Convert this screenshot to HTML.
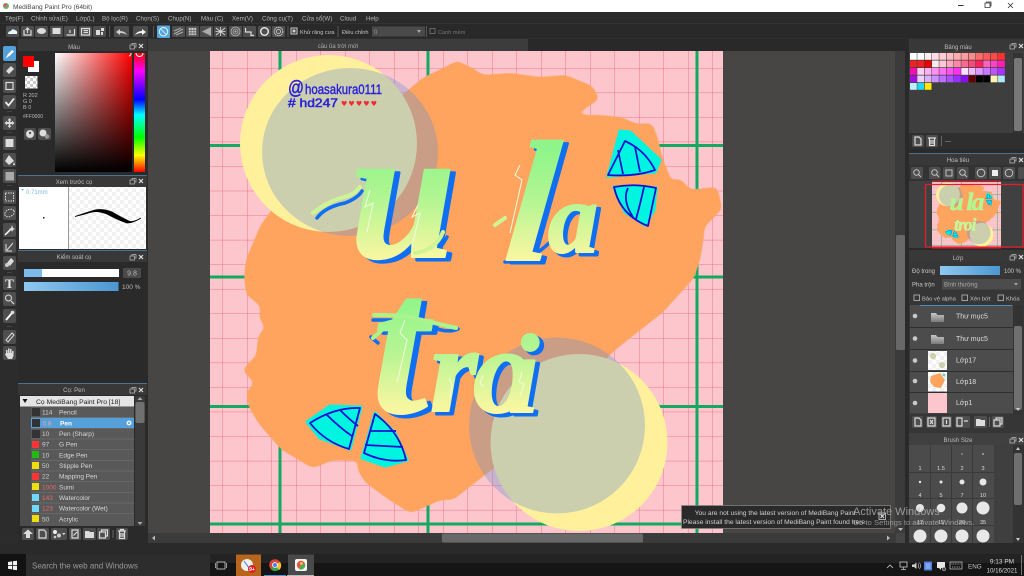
<!DOCTYPE html>
<html><head><meta charset="utf-8"><title>MediBang Paint Pro</title>
<style>
html,body{margin:0;padding:0;background:#2a2a2a;width:1024px;height:576px;overflow:hidden}
svg{display:block}
body>svg{filter:blur(.3px)}
text{font-family:"Liberation Sans","Noto Sans CJK SC",sans-serif}
.m{font-size:6.2px;fill:#b4b4b4}
.h{font-size:6px;fill:#bdbdbd;text-anchor:middle}
.l{font-size:6.5px;fill:#c8c8c8}
.b{fill:#4e4e4e}
.g{fill:#dcdcdc}
.s{fill:none;stroke:#dcdcdc;stroke-width:1.2}
.art text{font-family:"Liberation Serif",serif;font-style:italic;font-weight:bold}
.lay{font-size:7px;fill:#dedede}
.nm{font-size:6.5px;fill:#d8d8d8}
.num{font-size:6.5px;fill:#cfcfcf}
.sz{font-size:5.5px;fill:#ddd;text-anchor:middle}
</style></head><body>
<svg xmlns="http://www.w3.org/2000/svg" width="1024" height="576" viewBox="0 0 1024 576">
<defs>
<filter id="soft" x="-5%" y="-5%" width="110%" height="110%" color-interpolation-filters="sRGB"><feGaussianBlur stdDeviation="3.500"/><feComponentTransfer><feFuncA type="linear" slope="7" intercept="-3"/></feComponentTransfer></filter>
<pattern id="grid" x="247" y="68" width="24.5" height="24.55" patternUnits="userSpaceOnUse"><path d="M0 0V24.55M0 0H24.5" stroke="#ef7687" stroke-width="1" fill="none"/></pattern>
<pattern id="chk" width="6" height="6" patternUnits="userSpaceOnUse"><rect width="6" height="6" fill="#fff"/><rect width="3" height="3" fill="#ccc"/><rect x="3" y="3" width="3" height="3" fill="#ccc"/></pattern>
<pattern id="chk2" width="8" height="8" patternUnits="userSpaceOnUse"><rect width="8" height="8" fill="#fff"/><rect width="4" height="4" fill="#f1f1f1"/><rect x="4" y="4" width="4" height="4" fill="#f1f1f1"/></pattern>
<linearGradient id="sat"><stop offset="0" stop-color="#fff"/><stop offset="1" stop-color="#f00"/></linearGradient>
<linearGradient id="blk" x2="0" y2="1"><stop offset="0" stop-color="#000" stop-opacity="0"/><stop offset="1" stop-color="#000"/></linearGradient>
<linearGradient id="hue" x2="0" y2="1"><stop offset="0" stop-color="#f00"/><stop offset=".15" stop-color="#f0f"/><stop offset=".39" stop-color="#00f"/><stop offset=".52" stop-color="#0ff"/><stop offset=".71" stop-color="#0f0"/><stop offset=".86" stop-color="#ff0"/><stop offset="1" stop-color="#f00"/></linearGradient>
<linearGradient id="bar"><stop offset="0" stop-color="#8ec8f0"/><stop offset="1" stop-color="#4b97d2"/></linearGradient>
<linearGradient id="g1" gradientUnits="userSpaceOnUse" x1="0" y1="150" x2="0" y2="262"><stop offset="0" stop-color="#8ff58a"/><stop offset=".45" stop-color="#b4f592"/><stop offset="1" stop-color="#fdf7a2"/></linearGradient>
<linearGradient id="g2" gradientUnits="userSpaceOnUse" x1="0" y1="297" x2="0" y2="413"><stop offset="0" stop-color="#8ff58a"/><stop offset=".45" stop-color="#b4f592"/><stop offset="1" stop-color="#fdf7a2"/></linearGradient>
<linearGradient id="fold" x2="0" y2="1"><stop offset="0" stop-color="#c8c8c8"/><stop offset="1" stop-color="#7a7a7a"/></linearGradient>
<clipPath id="cv"><rect x="210" y="51" width="513" height="482"/></clipPath>
<g id="bgart">
  <rect x="210" y="51" width="513" height="482" fill="#fcc6cc"/>
  <rect x="210" y="51" width="513" height="482" fill="url(#grid)"/>
  <path d="M280 51V533M428 51V533M697 51V533M210 145.500H723M210 277H723M210 406.500H723M210 524H723" stroke="#14a862" stroke-width="3" fill="none"/>
  <path filter="url(#soft)" d="M403 98L425 80L442 72L457 64L470 70L482 78L510 76L540 80L565 78L590 88L596 98L582 107L566 116L556 112L566 118L600 118L620 120L637 127L650 126L654 136L660 160L667 177L670 188L678 181L690 193L715 190L719 208L702 225L700 243L697 260L691 277L661 310L614 347L560 400L500 460L480 475L452 497L440 497L411 510L390 497L367 480L360 468L363 458L333 457L313 465L283 447L262 423L252 407L249 393L259 383L246 370L259 357L261 337L269 328L262 317L264 305L249 293L247 277L249 260L263 227L273 213L300 180L350 130Z" fill="#fea45f" stroke="#fea45f" stroke-width="6" stroke-linejoin="round"/>
  <circle cx="328.500" cy="143.500" r="88.500" fill="#fff09b"/>
  <circle cx="579" cy="442.500" r="88.500" fill="#fff09b"/>
  <ellipse cx="350" cy="152" rx="88" ry="84" fill="#6790d4" fill-opacity=".34"/>
  <circle cx="557" cy="425.500" r="88" fill="#6790d4" fill-opacity=".34"/>
</g>
<g id="leaves">
  <path d="M620 131L630 132L660 160L655 172L608 176Z" fill="#00f5e0" stroke="#00f5e0" stroke-width="3" stroke-linejoin="round"/>
  <path d="M614 187L656 188L654 210L645 225L625 212Z" fill="#00f5e0" stroke="#00f5e0" stroke-width="3" stroke-linejoin="round"/>
  <path d="M307 422L330 406L361 407L350 449L320 438Z" fill="#00f5e0" stroke="#00f5e0" stroke-width="3" stroke-linejoin="round"/>
  <path d="M375 413L395 433L407 460L385 466L362 458Z" fill="#00f5e0" stroke="#00f5e0" stroke-width="3" stroke-linejoin="round"/>
  <g fill="none" stroke="#1212d0" stroke-width="1.800" stroke-linejoin="round">
    <path d="M625 141L608 175Q635 177 655 170Q645 150 625 141ZM618 150L623 174M635 147L640 172"/>
    <path d="M614 187Q635 183 656 188L648 226Q620 215 614 187ZM628 188Q622 200 633 217M644 187Q640 205 636 219"/>
    <path d="M310 423Q335 407 360 408L349 449Q325 442 310 423ZM326 414Q340 428 352 436M340 410Q350 420 358 426"/>
    <path d="M375 414L364 453Q385 463 406 460Q400 432 375 414ZM370 431L396 431M365 445L403 447"/>
  </g>
</g>
</defs>

<!-- app bg -->
<rect width="1024" height="576" fill="#2a2a2a"/>
<!-- title bar -->
<rect width="1024" height="12" fill="#fff"/>
<circle cx="6" cy="6" r="3" fill="#6fae6c"/><circle cx="5" cy="5" r="1.500" fill="#d9534f"/>
<text x="13" y="8.800" style="font-size:6.600px" fill="#444">MediBang Paint Pro (64bit)</text>
<path d="M958 5.500H963.500" stroke="#333"/><path d="M985 3H990V7.500H985ZM986.500 3V2H991V6H990" fill="none" stroke="#333" stroke-width=".8"/><path d="M1008 3L1013 8M1013 3L1008 8" stroke="#333" stroke-width=".8"/>
<!-- menu -->
<rect y="12" width="1024" height="12" fill="#2b2b2b"/>
<text class="m" x="5" y="20.500">Tệp(F)</text><text class="m" x="31" y="20.500">Chỉnh sửa(E)</text><text class="m" x="76" y="20.500">Lớp(L)</text><text class="m" x="102" y="20.500">Bộ lọc(R)</text><text class="m" x="136" y="20.500">Chọn(S)</text><text class="m" x="168" y="20.500">Chụp(N)</text><text class="m" x="201" y="20.500">Màu (C)</text><text class="m" x="232" y="20.500">Xem(V)</text><text class="m" x="262" y="20.500">Công cụ(T)</text><text class="m" x="302" y="20.500">Cửa sổ(W)</text><text class="m" x="340" y="20.500">Cloud</text><text class="m" x="366" y="20.500">Help</text>
<!-- toolbar -->
<rect y="24" width="1024" height="15" fill="#292929"/><path d="M0 23.500H1024M0 39H1024" stroke="#333"/>
<g>
<rect class="b" x="6" y="26" width="13" height="11" rx="1.500"/><path d="M8 34Q8 31 11 31Q12 28 15 30Q18 31 17 34Z" fill="#e8f4ff"/>
<rect class="b" x="21" y="26" width="13" height="11" rx="1.500"/><path class="s" d="M24 30V35H31V30M27.500 33V28M25.500 30L27.500 28L29.500 30"/>
<rect class="b" x="35" y="26" width="13" height="11" rx="1.500"/><ellipse class="g" cx="41.500" cy="31" rx="4.500" ry="3"/>
<rect class="b" x="50" y="26" width="13" height="11" rx="1.500"/><rect class="g" x="52.500" y="28" width="8" height="6"/>
<rect class="b" x="64" y="26" width="13" height="11" rx="1.500"/><path class="s" d="M66.500 35H74.500V29M70 33V30"/>
<rect class="b" x="79" y="26" width="13" height="11" rx="1.500"/><path class="s" d="M81.500 28.500H89.500V35H81.500ZM83.500 30.500H88M83.500 32.500H88"/>
<rect class="b" x="93" y="26" width="13" height="11" rx="1.500"/><path class="g" d="M96 30H100V35H96ZM101 28H104V31H101ZM101 32H103V35H101Z"/>
<rect class="b" x="114" y="26" width="15" height="11" rx="1.500"/><path d="M116 32L120 29V31Q125 31 127 35Q124 33 120 33V35Z" fill="#cfcfcf"/>
<rect class="b" x="133" y="26" width="15" height="11" rx="1.500"/><path d="M146 32L142 29V31Q137 31 135 35Q138 33 142 33V35Z" fill="#f4f4f4"/>
<rect x="157" y="25.500" width="13" height="12.500" rx="1" fill="#5aa5dc"/><circle cx="163.500" cy="31.700" r="4.200" fill="none" stroke="#dff" stroke-width=".9"/><path d="M160.500 28.700L166.500 34.700" stroke="#dff" stroke-width=".7"/>
<rect class="b" x="172" y="26" width="13" height="11" rx="1"/><path d="M174 34L183 29M174 31L181 28M176 35L183 32" stroke="#aaa" stroke-width="1.200"/>
<rect class="b" x="186" y="26" width="13" height="11" rx="1"/><path d="M188.500 27.500h8v8h-8zM191 27.500v8M194 27.500v8M188.500 30.300h8M188.500 33h8" fill="#ccc" stroke="#555" stroke-width=".7"/>
<rect class="b" x="200" y="26" width="13" height="11" rx="1"/><path d="M202 31.500L211 27V36Z" fill="#aaa"/>
<rect class="b" x="214" y="26" width="13" height="11" rx="1"/><path d="M216 28L225 35M225 28L216 35M220.500 27V36M215.500 31.500H225.500" stroke="#ddd" stroke-width=".8"/>
<rect class="b" x="229" y="26" width="13" height="11" rx="1"/><circle cx="235.500" cy="31.500" r="4.500" fill="none" stroke="#bbb" stroke-width=".8"/><circle cx="235.500" cy="31.500" r="2.500" fill="none" stroke="#bbb" stroke-width=".8"/><circle cx="235.500" cy="31.500" r="1" fill="#bbb"/>
<rect class="b" x="243" y="26" width="13" height="11" rx="1"/><path class="s" d="M245.500 28V32H251V35.500H254"/>
<rect class="b" x="258" y="26" width="13" height="11" rx="1"/><circle cx="264.500" cy="31.500" r="3.800" fill="none" stroke="#eee" stroke-width="1.400"/>
<rect class="b" x="272" y="26" width="13" height="11" rx="1"/><circle cx="278.500" cy="31.500" r="4.300" fill="none" stroke="#ddd" stroke-width="1" stroke-dasharray="1.500 .7"/><circle cx="278.500" cy="31.500" r="2" fill="none" stroke="#ddd" stroke-width=".8"/>
<path d="M109.500 26V37M153.500 26V37M288 26V37M338 26V37M426.500 26V37" stroke="#555"/>
<rect x="291" y="28" width="6" height="6" fill="none" stroke="#cfcfcf"/><rect x="292.500" y="29.500" width="3" height="3" fill="#cfcfcf"/>
<text x="300" y="34" style="font-size:5.600px" fill="#c4c4c4">Khử răng cưa</text>
<text x="342" y="34" style="font-size:5.600px" fill="#c4c4c4">Điều chỉnh</text>
<rect x="372" y="26.500" width="53" height="10" fill="#4a4a4a"/><text x="374" y="34" style="font-size:6px" fill="#999">0</text><path d="M417 30H421L419 33Z" fill="#aaa"/>
<rect x="430" y="28.500" width="5" height="5" fill="none" stroke="#666"/><text x="438" y="34" style="font-size:5.600px" fill="#777">Canh mềm</text>
</g>

<!-- left tools -->
<rect x="0" y="39" width="18" height="504" fill="#2c2c2c"/>
<rect x="3" y="46" width="13" height="15" rx="2" fill="#54a0d8"/><path d="M5.500 58.500L8 54L12 50L14 51.500L10 55.500Z" fill="#fff"/>
<rect class="b" x="3" y="63" width="13" height="14" rx="2"/><path class="g" d="M6 71L11 66L14 69L9 74Z"/>
<rect class="b" x="3" y="79" width="13" height="14" rx="2"/><rect class="s" x="6" y="82.500" width="7" height="7"/>
<rect class="b" x="3" y="95" width="13" height="14" rx="2"/><path d="M5.500 102L8.500 105.500L14 98.500" fill="none" stroke="#eee" stroke-width="1.800"/>
<rect class="b" x="3" y="116" width="13" height="14" rx="2"/><path class="g" d="M9.500 118L11.500 120.500H10.300V122H12V120.800L14.500 123L12 125.200V124H10.300V125.700H11.500L9.500 128L7.500 125.700H8.700V124H7V125.200L4.500 123L7 120.800V122H8.700V120.500H7.500Z"/>
<rect class="b" x="3" y="136" width="13" height="14" rx="2"/><rect class="g" x="5.500" y="139" width="8" height="8"/>
<rect class="b" x="3" y="153" width="13" height="14" rx="2"/><path class="g" d="M9 155L14 161L9 165L5 161Z"/><path d="M14 162L15 165H13Z" fill="#eee"/>
<rect class="b" x="3" y="169" width="13" height="14" rx="2"/><rect x="5.500" y="172" width="8.500" height="8.500" fill="#aaa"/>
<rect class="b" x="3" y="190" width="13" height="14" rx="2"/><rect x="5.500" y="193" width="8" height="8" fill="none" stroke="#ddd" stroke-dasharray="1.500 1"/>
<rect class="b" x="3" y="206" width="13" height="14" rx="2"/><ellipse cx="9.500" cy="213" rx="5" ry="3.500" fill="none" stroke="#ddd" stroke-dasharray="1.500 1" transform="rotate(-25 9.500 213)"/>
<rect class="b" x="3" y="223" width="13" height="14" rx="2"/><path d="M5 235L11 229" stroke="#fff" stroke-width="1.500"/><path class="g" d="M12 225L13 228L15 229L13 230L12 232L11 230L9 229L11 228Z"/>
<rect class="b" x="3" y="239" width="13" height="14" rx="2"/><path d="M6 244V251H12M7 250L13 243" fill="none" stroke="#ddd"/>
<rect class="b" x="3" y="256" width="13" height="14" rx="2"/><path class="g" d="M7 263L11 258L14 261L10 266Z"/><circle cx="7" cy="265" r="2" fill="#ccc"/>
<rect class="b" x="3" y="276" width="13" height="14" rx="2"/><text x="9.500" y="288" style="font-size:13px;font-weight:bold;font-family:'Liberation Serif',serif" fill="#eee" text-anchor="middle">T</text>
<rect class="b" x="3" y="292" width="13" height="14" rx="2"/><circle cx="8.500" cy="298" r="3" fill="none" stroke="#ddd"/><path d="M11 301L14 304" stroke="#ddd" stroke-width="1.200"/>
<rect class="b" x="3" y="309" width="13" height="14" rx="2"/><path d="M6 320L12 313" stroke="#fff" stroke-width="1.800"/><circle cx="12.500" cy="312.500" r="1.800" fill="#ddd"/>
<rect class="b" x="3" y="330" width="13" height="14" rx="2"/><path d="M6 340L12 333L14 335L8 342Z" fill="none" stroke="#ddd"/>
<rect class="b" x="3" y="346" width="13" height="14" rx="2"/><path class="g" d="M6 353V350H7.500V353H8V348.500H9.500V353H10V349H11.500V353H12V351L13.500 351V356L12 359H8L5 354.500Z"/>
<path d="M7 111.500H12M7 132.500H12M7 185.500H12M7 272.500H12M7 326.500H12" stroke="#444"/>

<!-- left panels -->
<rect x="18" y="39" width="129" height="504" fill="#2a2a2a"/>
<rect x="18" y="39" width="129" height="12" fill="#383838"/><text class="h" x="74" y="49">Màu</text>
<path d="M130 45H134.500V49H130ZM132 45V43.500H136V47H134.500" fill="none" stroke="#bbb" stroke-width=".7"/><path d="M139 44L143 48M143 44L139 48" stroke="#ddd" stroke-width="1.200"/>
<rect x="55" y="53" width="77" height="119" fill="url(#sat)"/><rect x="55" y="53" width="77" height="119" fill="url(#blk)"/>
<rect x="134" y="53" width="11" height="119" fill="url(#hue)"/>
<path d="M131 53A2.500 2.500 0 0 1 129 56M136 53A3.500 3.500 0 0 0 143 53" fill="none" stroke="#fff"/>
<rect x="28" y="61" width="11" height="11" fill="#fff"/><rect x="23" y="56" width="11" height="11" fill="#f00"/>
<rect x="25" y="76" width="12.500" height="12.500" fill="url(#chk)"/>
<text x="23" y="97" style="font-size:5.500px" fill="#bbb">R 202</text><text x="23" y="103" style="font-size:5.500px" fill="#bbb">G 0</text><text x="23" y="109" style="font-size:5.500px" fill="#bbb">B 0</text>
<text x="23" y="118" style="font-size:5px" fill="#bbb">#FF0000</text>
<rect class="b" x="24" y="128" width="12" height="12" rx="2"/><circle cx="30" cy="134" r="4" fill="#ddd"/><circle cx="30" cy="133" r="1.200" fill="#555"/>
<rect class="b" x="38" y="128" width="13" height="12" rx="2"/><circle cx="43" cy="133" r="3.500" fill="#ddd"/><circle cx="47" cy="136.500" r="2.200" fill="#999"/>

<rect x="18" y="175" width="129" height="12" fill="#383838"/><path d="M18 175.500H147" stroke="#4b7390"/>
<text class="h" x="74" y="184">Xem trước cọ</text>
<path d="M130 180H134.500V184H130ZM132 180V178.500H136V182H134.500" fill="none" stroke="#bbb" stroke-width=".7"/><path d="M139 179L143 183M143 179L139 183" stroke="#ddd" stroke-width="1.200"/>
<rect x="19" y="187" width="49" height="62" fill="#fff"/>
<rect x="68" y="187" width="1" height="62" fill="#999"/>
<rect x="69" y="187" width="77" height="62" fill="url(#chk2)"/>
<text x="26" y="194" style="font-size:6px" fill="#7fb8e0">0.71mm</text><path d="M21 189H24L22.500 191Z" fill="#7fb8e0"/>
<rect x="43" y="217" width="1.500" height="1.500" fill="#222"/>
<path d="M75 216.500Q85 213 95 210Q103 208.500 112 212Q122 218 130 221.500Q135 222 141 218Q133 223 127 223Q118 220 107 214Q97 210 90 212.500Q82 215 75 216.500Z" fill="#000" stroke="#000" stroke-width=".8"/>

<rect x="18" y="250" width="129" height="12" fill="#383838"/><path d="M18 250.500H147" stroke="#4b7390"/>
<text class="h" x="74" y="259">Kiểm soát cọ</text>
<path d="M130 256H134.500V260H130ZM132 256V254.500H136V258H134.500" fill="none" stroke="#bbb" stroke-width=".7"/><path d="M139 255L143 259M143 255L139 259" stroke="#ddd" stroke-width="1.200"/>
<rect x="24" y="269" width="95" height="8" fill="#fff"/><rect x="24" y="269" width="18" height="8" fill="#7dbcea"/>
<rect x="123" y="268" width="18" height="10" fill="#4a4a4a" rx="1"/><text x="132" y="275.500" style="font-size:7px" fill="#bbb" text-anchor="middle">9.8</text>
<rect x="24" y="282" width="94.500" height="9" fill="url(#bar)"/><text x="122" y="289" style="font-size:6.500px" fill="#bbb">100 %</text>

<rect x="18" y="383" width="129" height="12" fill="#383838"/><path d="M18 383.500H147" stroke="#4b7390"/>
<text class="h" x="74" y="392">Cọ: Pen</text>
<path d="M130 389H134.500V393H130ZM132 389V387.500H136V391H134.500" fill="none" stroke="#bbb" stroke-width=".7"/><path d="M139 388L143 392M143 388L139 392" stroke="#ddd" stroke-width="1.200"/>
<rect x="20" y="396" width="114" height="130" fill="#4c4c4c"/>
<rect x="20" y="396" width="114" height="10.500" fill="#e4e4e4"/>
<path d="M22.500 399H27.500L25 403Z" fill="#111"/><text x="36" y="404" style="font-size:6.800px" fill="#222">Cọ MediBang Paint Pro [18]</text>
<rect x="31" y="407" width="103" height="119" fill="#595959"/>
<rect x="31" y="417.500" width="103" height="10.500" fill="#55a0d8"/>
<path d="M31 417.500H134M31 428.500H134M31 439H134M31 449.500H134M31 460.500H134M31 471H134M31 481.500H134M31 492.500H134M31 503H134M31 513.500H134" stroke="#6c6c6c" stroke-width=".8"/>
<g>
<rect x="32" y="408" width="8" height="8" fill="#333"/><rect x="32" y="419" width="8" height="8" fill="#333"/><rect x="32" y="430" width="8" height="8" fill="#333"/><rect x="32" y="441" width="7" height="7" fill="#f33"/><rect x="32" y="451" width="7" height="7" fill="#2b1"/><rect x="32" y="462" width="7" height="7" fill="#ed1"/><rect x="32" y="473" width="7" height="7" fill="#f33"/><rect x="32" y="483" width="7" height="7" fill="#ed1"/><rect x="32" y="494" width="7" height="7" fill="#6fd8ff"/><rect x="32" y="505" width="7" height="7" fill="#6fd8ff"/><rect x="32" y="515" width="7" height="7" fill="#ed1"/>
</g>
<text class="num" x="42" y="414.500">114</text><text class="num" x="42.500" y="425.500" style="fill:#f9a0a0">0.8</text><text class="num" x="42" y="436">10</text><text class="num" x="42" y="446.500">97</text><text class="num" x="42" y="457.500">10</text><text class="num" x="42" y="468">50</text><text class="num" x="42" y="478.500">22</text><text class="num" x="42" y="489.500" style="fill:#e36a6a">1000</text><text class="num" x="42" y="500" style="fill:#e36a6a">143</text><text class="num" x="42" y="510.500" style="fill:#e36a6a">123</text><text class="num" x="42" y="521.500">50</text>
<text class="nm" x="59" y="414.500">Pencil</text><text class="nm" x="60" y="425.500" style="fill:#fff;font-weight:bold">Pen</text><text class="nm" x="59" y="436">Pen (Sharp)</text><text class="nm" x="59" y="446.500">G Pen</text><text class="nm" x="59" y="457.500">Edge Pen</text><text class="nm" x="59" y="468">Stipple Pen</text><text class="nm" x="59" y="478.500">Mapping Pen</text><text class="nm" x="59" y="489.500">Sumi</text><text class="nm" x="59" y="500">Watercolor</text><text class="nm" x="59" y="510.500">Watercolor (Wet)</text><text class="nm" x="59" y="521.500">Acrylic</text>
<circle cx="129" cy="423" r="2.500" fill="#e8f4ff"/><circle cx="129" cy="423" r="1" fill="#55a0d8"/>
<rect x="135" y="396" width="10" height="130" fill="#3a3a3a"/><rect x="135.500" y="402" width="9" height="21" rx="2" fill="#707070"/><path d="M137.500 400L140 397L142.500 400Z" fill="#aaa"/><path d="M137.500 522L140 525L142.500 522Z" fill="#aaa"/>
<g>
<rect class="b" x="22" y="528" width="12" height="12" rx="1.500"/><path class="g" d="M28 529.500L33 534H30V538H26V534H23Z"/>
<rect class="b" x="36" y="528" width="13" height="12" rx="1.500"/><path class="s" d="M39 530H44L46 532V538H39Z" stroke-width=".9"/>
<rect class="b" x="51" y="528" width="16" height="12" rx="1.500"/><circle cx="55" cy="532" r="2" fill="#eee"/><circle cx="59" cy="535.500" r="2" fill="#ccc"/><circle cx="55" cy="537" r="1.300" fill="#ccc"/><path d="M62 533H65.500L63.800 535Z" fill="#ddd"/>
<rect class="b" x="69" y="528" width="12" height="12" rx="1.500"/><path class="s" d="M72 530H78V538H72ZM73.500 535.500L77 532" stroke-width=".8"/>
<rect class="b" x="83" y="528" width="13" height="12" rx="1.500"/><path class="g" d="M85 531H89L90 532H94V538H85Z"/>
<rect class="b" x="97" y="528" width="13" height="12" rx="1.500"/><path class="s" d="M99.500 532H105.500V538H99.500ZM101.500 532V530H107.500V536H105.500" stroke-width=".8"/>
<path d="M113 530V538" stroke="#666"/>
<rect class="b" x="116" y="528" width="12" height="12" rx="1.500"/><path class="s" d="M118 531H126M119.500 531V538.500H124.500V531M121 533V537M123 533V537M120.500 531V529.500H123.500V531" stroke-width=".8"/>
</g>

<!-- canvas area -->
<rect x="148" y="39" width="757" height="504" fill="#474644"/>
<rect x="148" y="39" width="380" height="12" fill="#3c3c3c"/><rect x="528" y="39" width="377" height="12" fill="#292929"/>
<text class="h" x="338" y="48" style="fill:#aaa">cầu ủa trời mới</text>
<use href="#bgart" clip-path="url(#cv)"/>
<g clip-path="url(#cv)">
<use href="#leaves"/>
<!-- handle -->
<text x="288" y="94" textLength="16" lengthAdjust="spacingAndGlyphs" style="font-size:19px" fill="#2a20dc" stroke="#2a20dc" stroke-width=".5">@</text>
<text x="305" y="94" textLength="77" lengthAdjust="spacingAndGlyphs" style="font-size:14px" fill="#2a20dc" stroke="#2a20dc" stroke-width=".4">hoasakura0111</text>
<text x="288" y="107" textLength="50" lengthAdjust="spacingAndGlyphs" style="font-size:12px" fill="#2a20dc" stroke="#2a20dc" stroke-width=".5"># hd247</text>
<text x="341" y="106" textLength="36" lengthAdjust="spacing" style="font-size:7px;font-family:'DejaVu Sans',sans-serif" fill="#ef2a3a">♥♥♥♥♥</text>

<!-- big lettering: blue shadow -->
<g class="art" fill="#0f6ff0" stroke="#0f6ff0" stroke-width="3" stroke-linejoin="round">
<text x="355" y="260" style="font-size:190px">u</text>
<text x="495" y="263" style="font-size:172px" transform="skewX(-6) translate(40 0)">l</text>
<text x="552" y="255" style="font-size:100px">a</text>
<text x="377" y="415" style="font-size:200px">t</text>
<text x="434" y="414" style="font-size:122px">r</text>
<text x="477" y="415" style="font-size:122px">o</text>
<text x="512" y="415" style="font-size:112px">i</text>
</g>
<path d="M317 218Q325 207 345 203Q358 198 362 191M420 259Q438 255 447 237M505 262Q530 262 549 243M373 320H391M430 326Q447 334 458 329M378 343L371 337" fill="none" stroke="#0f6ff0" stroke-width="3.500" stroke-linecap="round"/>
<!-- big lettering: gradient face -->
<g class="art" fill="url(#g1)" stroke="url(#g1)" stroke-width="2" stroke-linejoin="round">
<text x="350" y="257" style="font-size:190px">u</text>
<text x="490" y="260" style="font-size:172px" transform="skewX(-6) translate(40 0)">l</text>
<text x="548" y="252" style="font-size:100px">a</text>
</g>
<g class="art" fill="url(#g2)" stroke="url(#g2)" stroke-width="2" stroke-linejoin="round">
<text x="372" y="412" style="font-size:200px">t</text>
<text x="430" y="411" style="font-size:122px">r</text>
<text x="473" y="412" style="font-size:122px">o</text>
<text x="508" y="412" style="font-size:112px">i</text>
</g>
<path d="M313 213Q330 200 345 197Q355 194 360 187M415 253Q436 250 443 232M495 225L505 218" fill="none" stroke="#cdf596" stroke-width="4" stroke-linecap="round"/>
<path d="M374 315Q390 315 405 316Q430 322 456 328M373 338L382 330" fill="none" stroke="#a8f590" stroke-width="4" stroke-linecap="round"/>
<path d="M370 190L365 207L373 203L367 232M418 205L412 217L420 213L412 247M520 165L515 175L522 180L510 233M405 320L400 333L407 340L397 383M449 378L452 385L450 398M483 375L480 383L484 387M522 372L519 382L524 384L520 397" fill="none" stroke="#f2fbe0" stroke-width="1"/>
</g>

<!-- canvas scrollbars -->
<rect x="148" y="533" width="748" height="10" fill="#3b3b3b"/><rect x="442" y="533.500" width="201" height="9" rx="1.500" fill="#686868"/>
<path d="M152 538L155 535.500V540.500Z" fill="#bbb"/><path d="M890 538L887 535.500V540.500Z" fill="#bbb"/>
<rect x="895" y="51" width="10" height="482" fill="#3b3b3b"/><rect x="896" y="235" width="9" height="115" rx="1.500" fill="#686868"/>
<path d="M898 528H903L900.500 531Z" fill="#bbb"/>

<!-- right panels -->
<rect x="905" y="39" width="119" height="504" fill="#2a2a2a"/>
<rect x="909" y="39" width="115" height="110" fill="#3e3e3e"/>
<rect x="909" y="39" width="115" height="12" fill="#383838"/><text class="h" x="958" y="49">Bảng màu</text>
<path d="M1010 45H1014.500V49H1010ZM1012 45V43.500H1016V47H1014.500" fill="none" stroke="#bbb" stroke-width=".7"/><path d="M1019 44L1023 48M1023 44L1019 48" stroke="#ddd" stroke-width="1.200"/>
<g>
<g transform="translate(0 53)"><rect width="6.800" height="6.800" x="910" fill="#fff"/><rect width="6.800" height="6.800" x="917.300" fill="#fff"/><rect width="6.800" height="6.800" x="924.700" fill="#ffeef2"/><rect width="6.800" height="6.800" x="932" fill="#ffdde2"/><rect width="6.800" height="6.800" x="939.300" fill="#ffcdd2"/><rect width="6.800" height="6.800" x="946.700" fill="#ffbcc2"/><rect width="6.800" height="6.800" x="954" fill="#ffacb0"/><rect width="6.800" height="6.800" x="961.300" fill="#ff9a9e"/><rect width="6.800" height="6.800" x="968.700" fill="#ff8a8a"/><rect width="6.800" height="6.800" x="976" fill="#ff6a6a"/><rect width="6.800" height="6.800" x="983.300" fill="#ff5a5a"/><rect width="6.800" height="6.800" x="990.700" fill="#ff4a4a"/><rect width="6.800" height="6.800" x="998" fill="#ff3030"/></g>
<g transform="translate(0 60.500)"><rect width="6.800" height="6.800" x="910" fill="#ee2222"/><rect width="6.800" height="6.800" x="917.300" fill="#ee2222"/><rect width="6.800" height="6.800" x="924.700" fill="#ee0000"/><rect width="6.800" height="6.800" x="932" fill="#ffe8ee"/><rect width="6.800" height="6.800" x="939.300" fill="#ffc8d8"/><rect width="6.800" height="6.800" x="946.700" fill="#ffa8c0"/><rect width="6.800" height="6.800" x="954" fill="#ff88a8"/><rect width="6.800" height="6.800" x="961.300" fill="#ff6890"/><rect width="6.800" height="6.800" x="968.700" fill="#ff4878"/><rect width="6.800" height="6.800" x="976" fill="#ff2060"/><rect width="6.800" height="6.800" x="983.300" fill="#ff60c0"/><rect width="6.800" height="6.800" x="990.700" fill="#ff40c0"/><rect width="6.800" height="6.800" x="998" fill="#ff20b0"/></g>
<g transform="translate(0 68)"><rect width="6.800" height="6.800" x="910" fill="#f010b0"/><rect width="6.800" height="6.800" x="917.300" fill="#ffd0f0"/><rect width="6.800" height="6.800" x="924.700" fill="#ffb0f0"/><rect width="6.800" height="6.800" x="932" fill="#ff90f0"/><rect width="6.800" height="6.800" x="939.300" fill="#ff70f0"/><rect width="6.800" height="6.800" x="946.700" fill="#ff50f0"/><rect width="6.800" height="6.800" x="954" fill="#ff30f0"/><rect width="6.800" height="6.800" x="961.300" fill="#ffe0ff"/><rect width="6.800" height="6.800" x="968.700" fill="#eebbff"/><rect width="6.800" height="6.800" x="976" fill="#dd99ff"/><rect width="6.800" height="6.800" x="983.300" fill="#cc77ff"/><rect width="6.800" height="6.800" x="990.700" fill="#bb55ff"/><rect width="6.800" height="6.800" x="998" fill="#aa33ff"/></g>
<g transform="translate(0 75.500)"><rect width="6.800" height="6.800" x="910" fill="#a010e0"/><rect width="6.800" height="6.800" x="917.300" fill="#f0d0ff"/><rect width="6.800" height="6.800" x="924.700" fill="#ddb0ff"/><rect width="6.800" height="6.800" x="932" fill="#cc90ff"/><rect width="6.800" height="6.800" x="939.300" fill="#bb70ff"/><rect width="6.800" height="6.800" x="946.700" fill="#aa50ff"/><rect width="6.800" height="6.800" x="954" fill="#9930ff"/><rect width="6.800" height="6.800" x="961.300" fill="#8810ee"/><rect width="6.800" height="6.800" x="968.700" fill="#660000"/><rect width="6.800" height="6.800" x="976" fill="#000"/><rect width="6.800" height="6.800" x="983.300" fill="#000"/><rect width="6.800" height="6.800" x="990.700" fill="#fff5b0"/><rect width="6.800" height="6.800" x="998" fill="#aeeaff"/></g>
<g transform="translate(0 83)"><rect width="6.800" height="6.800" x="910" fill="#bfeeff"/><rect width="6.800" height="6.800" x="917.300" fill="#20d8f0"/><rect width="6.800" height="6.800" x="924.700" fill="#ffe800"/></g>
</g>
<rect x="1013" y="53" width="10" height="80" fill="#333"/><rect x="1014" y="58" width="8" height="73" rx="2" fill="#777"/>
<rect x="909" y="133" width="115" height="16" fill="#2f2f2f"/>
<rect class="b" x="912" y="135" width="12" height="12" rx="1.500"/><path class="s" d="M915 137H919L921 139V145H915Z" stroke-width=".9"/>
<rect class="b" x="926" y="135" width="12" height="12" rx="1.500"/><path class="s" d="M928 138H936M929.500 138V145.500H934.500V138M931 140V144M933 140V144" stroke-width=".8"/>
<path d="M941.500 136V146" stroke="#666"/><text x="945" y="143" style="font-size:6px" fill="#bbb">---</text>

<rect x="909" y="153" width="115" height="95" fill="#333"/>
<rect x="909" y="153" width="115" height="12" fill="#383838"/><path d="M909 153.500H1024" stroke="#4b7390"/><text class="h" x="958" y="162">Hoa tiêu</text>
<path d="M1010 159H1014.500V163H1010ZM1012 159V157.500H1016V161H1014.500" fill="none" stroke="#bbb" stroke-width=".7"/><path d="M1019 158L1023 162M1023 158L1019 162" stroke="#ddd" stroke-width="1.200"/>
<g fill="#4e4e4e">
<rect x="911" y="167" width="12" height="12" rx="1.500"/><rect x="929" y="167" width="11.500" height="12" rx="1.500"/><rect x="943" y="167" width="11.500" height="12" rx="1.500"/><rect x="957" y="167" width="11.500" height="12" rx="1.500"/><rect x="975" y="167" width="12" height="12" rx="1.500"/><rect x="989" y="167" width="12" height="12" rx="1.500"/><rect x="1003" y="167" width="12" height="12" rx="1.500"/><rect x="1018" y="167" width="6" height="12" rx="1.500"/>
</g>
<g fill="none" stroke="#ccc" stroke-width=".9"><circle cx="916.500" cy="172.500" r="2.800"/><path d="M918.500 174.500L921 177"/><circle cx="934.500" cy="172.500" r="2.800"/><path d="M936.500 174.500L939 177"/><rect x="946" y="170" width="6" height="6"/><circle cx="962.500" cy="172.500" r="2.800"/><path d="M964.500 174.500L967 177"/><circle cx="981" cy="173" r="3.800"/><circle cx="1009" cy="173" r="3.800"/></g>
<rect x="992" y="170" width="6" height="6" fill="#eee"/>
<rect x="909" y="181" width="115" height="67" fill="#404040"/>
<svg x="932" y="181" width="69" height="67" viewBox="210 51 513 482"><use href="#bgart"/><use href="#leaves"/><g class="art"><text x="340" y="258" fill="#b4f592" stroke="#b4f592" stroke-width="4" style="font-size:190px" textLength="260">u la</text><text x="375" y="412" fill="#c8f59a" stroke="#c8f59a" stroke-width="4" style="font-size:130px" textLength="165">troi</text></g></svg>
<rect x="925.500" y="184.500" width="97.500" height="62.500" fill="none" stroke="#e81c2c" stroke-width="1.200"/>
<path d="M932 181H1001M932 248H1001" stroke="#e81c2c"/>

<rect x="909" y="250" width="115" height="183" fill="#363636"/>
<rect x="909" y="250" width="115" height="12" fill="#383838"/><text class="h" x="958" y="260">Lớp</text>
<path d="M1010 256H1014.500V260H1010ZM1012 256V254.500H1016V258H1014.500" fill="none" stroke="#bbb" stroke-width=".7"/><path d="M1019 255L1023 259M1023 255L1019 259" stroke="#ddd" stroke-width="1.200"/>
<text x="912" y="273" style="font-size:6px" fill="#c8c8c8">Độ trong</text>
<rect x="940" y="266" width="60" height="9" fill="url(#bar)"/><text x="1004" y="273" style="font-size:6px" fill="#c8c8c8">100 %</text>
<text x="912" y="286.500" style="font-size:6px" fill="#c8c8c8">Pha trộn</text>
<rect x="942" y="279" width="79" height="10.500" fill="#4c4c4c"/><text x="944" y="286.500" style="font-size:6px" fill="#aaa">Bình thường</text><path d="M1014 283H1018L1016 285.500Z" fill="#aaa"/>
<g fill="none" stroke="#bbb" stroke-width=".8"><rect x="914" y="295" width="5.500" height="5.500"/><rect x="962" y="295" width="5.500" height="5.500"/><rect x="998" y="295" width="5.500" height="5.500"/></g>
<text x="922" y="300.500" style="font-size:5.800px" fill="#c4c4c4">Bảo vệ alpha</text><text x="970" y="300.500" style="font-size:5.800px" fill="#c4c4c4">Xén bớt</text><text x="1006" y="300.500" style="font-size:5.800px" fill="#c4c4c4">Khóa</text>

<rect x="910" y="305" width="103" height="109" fill="#2f2f2f"/>
<rect x="910" y="305" width="103" height="22" fill="#4c4c4c"/><rect x="910" y="328" width="103" height="21" fill="#4c4c4c"/><rect x="910" y="350" width="103" height="21" fill="#4c4c4c"/><rect x="910" y="372" width="103" height="20" fill="#4c4c4c"/><rect x="910" y="393" width="103" height="20.500" fill="#4c4c4c"/>
<path d="M920 305.500H1012" stroke="#4f8cbc"/>
<g fill="#c8c8c8"><circle cx="915" cy="316" r="2.300"/><circle cx="915" cy="338.500" r="2.300"/><circle cx="915" cy="360.500" r="2.300"/><circle cx="915" cy="381" r="2.300"/><circle cx="915" cy="403" r="2.300"/></g>
<path d="M931 313H936L937.500 315H944V322H931Z" fill="url(#fold)"/><path d="M931 335H936L937.500 337H944V344H931Z" fill="url(#fold)"/>
<rect x="928" y="351" width="19" height="19" fill="url(#chk2)"/><circle cx="933" cy="356" r="3.200" fill="#cfd2ae"/><circle cx="942" cy="365" r="3.200" fill="#cfd2ae"/>
<rect x="928" y="372" width="19" height="19.500" fill="url(#chk2)"/><path d="M931 376L940 373L945 380L941 388L934 387L930 382Z" fill="#fea45f"/><circle cx="944" cy="375" r="1.500" fill="#6ad0c0"/>
<rect x="928" y="393" width="19" height="20" fill="#fcc6cc"/>
<text class="lay" x="956" y="318.500">Thư mục5</text><text class="lay" x="956" y="341">Thư mục5</text><text class="lay" x="956" y="362.500">Lớp17</text><text class="lay" x="956" y="384">Lớp18</text><text class="lay" x="956" y="405">Lớp1</text>
<rect x="1013" y="305" width="10" height="109" fill="#333"/><rect x="1014" y="326" width="8" height="84" rx="2" fill="#6f6f6f"/><path d="M1016 408L1018 411L1020 408Z" fill="#ccc"/>
<g>
<rect class="b" x="912" y="416" width="11" height="12" rx="1.500"/><path class="s" d="M915 418H919L921 420V426H915Z" stroke-width=".8"/>
<rect class="b" x="926" y="416" width="11" height="12" rx="1.500"/><path class="s" d="M928 418H935V426H928ZM930 420L933 424M933 420L930 424" stroke-width=".7"/>
<rect class="b" x="941" y="416" width="11" height="12" rx="1.500"/><path class="s" d="M943 418H950V426H943ZM946.500 420V424" stroke-width=".7"/>
<rect class="b" x="955" y="416" width="15" height="12" rx="1.500"/><path class="s" d="M957 418H962V426H957ZM964 421H968" stroke-width=".7"/>
<rect class="b" x="974" y="416" width="13" height="12" rx="1.500"/><path class="g" d="M976 419H980L981 420H985V426H976Z"/>
<path d="M989.500 417V427" stroke="#666"/>
<rect class="b" x="992" y="416" width="12" height="12" rx="1.500"/><path class="s" d="M994 420H1000V426H994ZM996 420V418H1002V424H1000" stroke-width=".7"/>
</g>

<rect x="909" y="433" width="115" height="110" fill="#333"/>
<rect x="909" y="433" width="115" height="12" fill="#404040"/><text class="h" x="958" y="442">Brush Size</text>
<path d="M1010 439H1014.500V443H1010ZM1012 439V437.500H1016V441H1014.500" fill="none" stroke="#bbb" stroke-width=".7"/><path d="M1019 438L1023 442M1023 438L1019 442" stroke="#ddd" stroke-width="1.200"/>
<rect x="909" y="445" width="85" height="98" fill="#4b4b4b"/>
<path d="M930.500 445V543M951.500 445V543M972.500 445V543M909 472.500H994M909 498.500H994M909 525.500H994" stroke="#3a3a3a"/>
<rect x="994" y="445" width="19" height="98" fill="#3f3f3f"/>
<g fill="#e8e8e8"><circle cx="962" cy="454" r=".6"/><circle cx="983" cy="454" r=".8"/><circle cx="920" cy="482" r="1.200"/><circle cx="941" cy="482" r="1.500"/><circle cx="962" cy="482" r="2.500"/><circle cx="983" cy="482" r="3.500"/><circle cx="920" cy="508" r="4"/><circle cx="941" cy="508" r="4.300"/><circle cx="962" cy="508" r="5.500"/><circle cx="983" cy="508" r="6.500"/><circle cx="920" cy="536" r="6.500"/><circle cx="941" cy="536" r="6.500"/><circle cx="962" cy="536" r="6.500"/><circle cx="983" cy="536" r="6.500"/></g>
<text class="sz" x="920" y="470">1</text><text class="sz" x="941" y="470">1.5</text><text class="sz" x="962" y="470">2</text><text class="sz" x="983" y="470">3</text><text class="sz" x="920" y="497">4</text><text class="sz" x="941" y="497">5</text><text class="sz" x="962" y="497">7</text><text class="sz" x="983" y="497">10</text><text class="sz" x="920" y="524">12</text><text class="sz" x="941" y="524">15</text><text class="sz" x="962" y="524">20</text><text class="sz" x="983" y="524">35</text>
<rect x="1013" y="445" width="10" height="98" fill="#333"/><rect x="1014" y="453" width="8" height="52" rx="2" fill="#707070"/><path d="M1016 450H1020L1018 447Z" fill="#ccc"/><path d="M1016 538H1020L1018 541Z" fill="#ccc"/>

<!-- toast -->
<rect x="681.500" y="505.500" width="209" height="23" fill="#2a2a2a" stroke="#8a8a8a" stroke-width=".7"/>
<text x="776" y="515" style="font-size:6.700px" fill="#d0d0d0" text-anchor="middle">You are not using the latest version of MediBang Paint.</text>
<text x="775" y="524" style="font-size:6.700px" fill="#d0d0d0" text-anchor="middle">Please install the latest version of MediBang Paint found here.</text>
<rect x="879" y="513" width="6.500" height="6.500" fill="none" stroke="#ccc" stroke-width=".8"/><path d="M880.500 514.500L884 518M884 514.500L880.500 518" stroke="#eee" stroke-width=".9"/>
<!-- watermark -->
<text x="853" y="515" style="font-size:11px" fill="#bcbcbc" fill-opacity=".75">Activate Windows</text>
<text x="853" y="525" style="font-size:7.700px" fill="#bcbcbc" fill-opacity=".7">Go to Settings to activate Windows.</text>

<!-- taskbar -->
<rect y="543" width="1024" height="11" fill="#2a2a2a"/>
<rect x="210" y="554" width="814" height="9" fill="#232323"/>
<rect x="210" y="563" width="814" height="13" fill="#151515"/>
<rect y="554" width="26" height="22" fill="#121212"/>
<path d="M8 562L12 561.400V565H8ZM12.800 561.300L17 560.700V565H12.800ZM8 565.800H12V569.400L8 568.800ZM12.800 565.800H17V570.300L12.800 569.600Z" fill="#f2f2f2"/>
<rect x="26" y="554" width="184" height="22" fill="#2d2d2d"/>
<text x="32" y="568.500" style="font-size:8px" fill="#9a9a9a">Search the web and Windows</text>
<rect x="217" y="562" width="8" height="7" fill="none" stroke="#cfcfcf" stroke-width=".8"/><path d="M215.500 563V568M226.500 563V568" stroke="#cfcfcf" stroke-width=".7"/>
<rect x="236" y="554.500" width="25" height="21.500" fill="#b8651d"/><circle cx="247" cy="565" r="6" fill="#f1f1f1"/><path d="M244 561L249 568" stroke="#3b78d8"/><circle cx="252" cy="569" r="4" fill="#e02020"/><text x="252" y="571" style="font-size:5px;font-weight:bold" fill="#fff" text-anchor="middle">9+</text>
<circle cx="275" cy="565" r="5.800" fill="#d9453a"/><path d="M275 565L280.500 567A5.800 5.800 0 0 1 271 569.500Z" fill="#2fa84f"/><path d="M275 565L280 562A5.800 5.800 0 0 1 279 570Z" fill="#fbc02d"/><circle cx="275" cy="565" r="2.500" fill="#4a86e8" stroke="#fff" stroke-width=".8"/>
<path d="M264 575.500H286" stroke="#5a8fc8"/>
<rect x="288" y="554.500" width="26" height="21.500" fill="#4a4a4a"/><rect x="295" y="559" width="12" height="12" rx="2" fill="#f4f4f4"/><circle cx="301" cy="565" r="4.200" fill="#e0584a"/><path d="M301 565L305 564A4.200 4.200 0 0 1 299 569Z" fill="#4cae50"/><circle cx="301.500" cy="563.500" r="1.500" fill="#f6c23c"/>
<path d="M287 575.500H314" stroke="#bbb"/>
<path d="M887 568L890 565L893 568" fill="none" stroke="#ccc" stroke-width=".8"/>
<rect x="900" y="562" width="7" height="5" fill="none" stroke="#ccc" stroke-width=".8"/><path d="M903.500 567V569.500M901 569.500H906" stroke="#ccc" stroke-width=".7"/>
<path d="M912 564.500H914L916.500 562.500V569L914 567H912Z" fill="#ccc"/><path d="M918 563.500Q919.500 565.700 918 568M919.500 562.500Q921.500 565.700 919.500 569" fill="none" stroke="#ccc" stroke-width=".6"/>
<rect x="924" y="561.500" width="8" height="9" fill="#4d7fe0"/><path d="M925.500 564H930.500M925.500 566H930.500M925.500 568H930.500" stroke="#dbe6ff" stroke-width=".7"/>
<path d="M937 562H945V568H941V570L939 568H937Z" fill="#e8e8e8"/><circle cx="944" cy="569" r="1.800" fill="#444" stroke="#ddd" stroke-width=".5"/>
<rect x="950" y="562" width="12" height="7" fill="none" stroke="#ccc" stroke-width=".7"/><path d="M951.500 564H960.500M952 567H960" stroke="#ccc" stroke-width=".7" stroke-dasharray="1 .7"/>
<text x="968" y="568.500" style="font-size:6.300px" fill="#c8c8c8">ENG</text>
<text x="1002" y="563.500" style="font-size:6.500px" fill="#ddd" text-anchor="middle">9:13 PM</text>
<text x="1002" y="572.500" style="font-size:6.200px" fill="#ddd" text-anchor="middle">10/16/2021</text>
<path d="M1021.500 555V575" stroke="#777"/>
</svg>
</body></html>
